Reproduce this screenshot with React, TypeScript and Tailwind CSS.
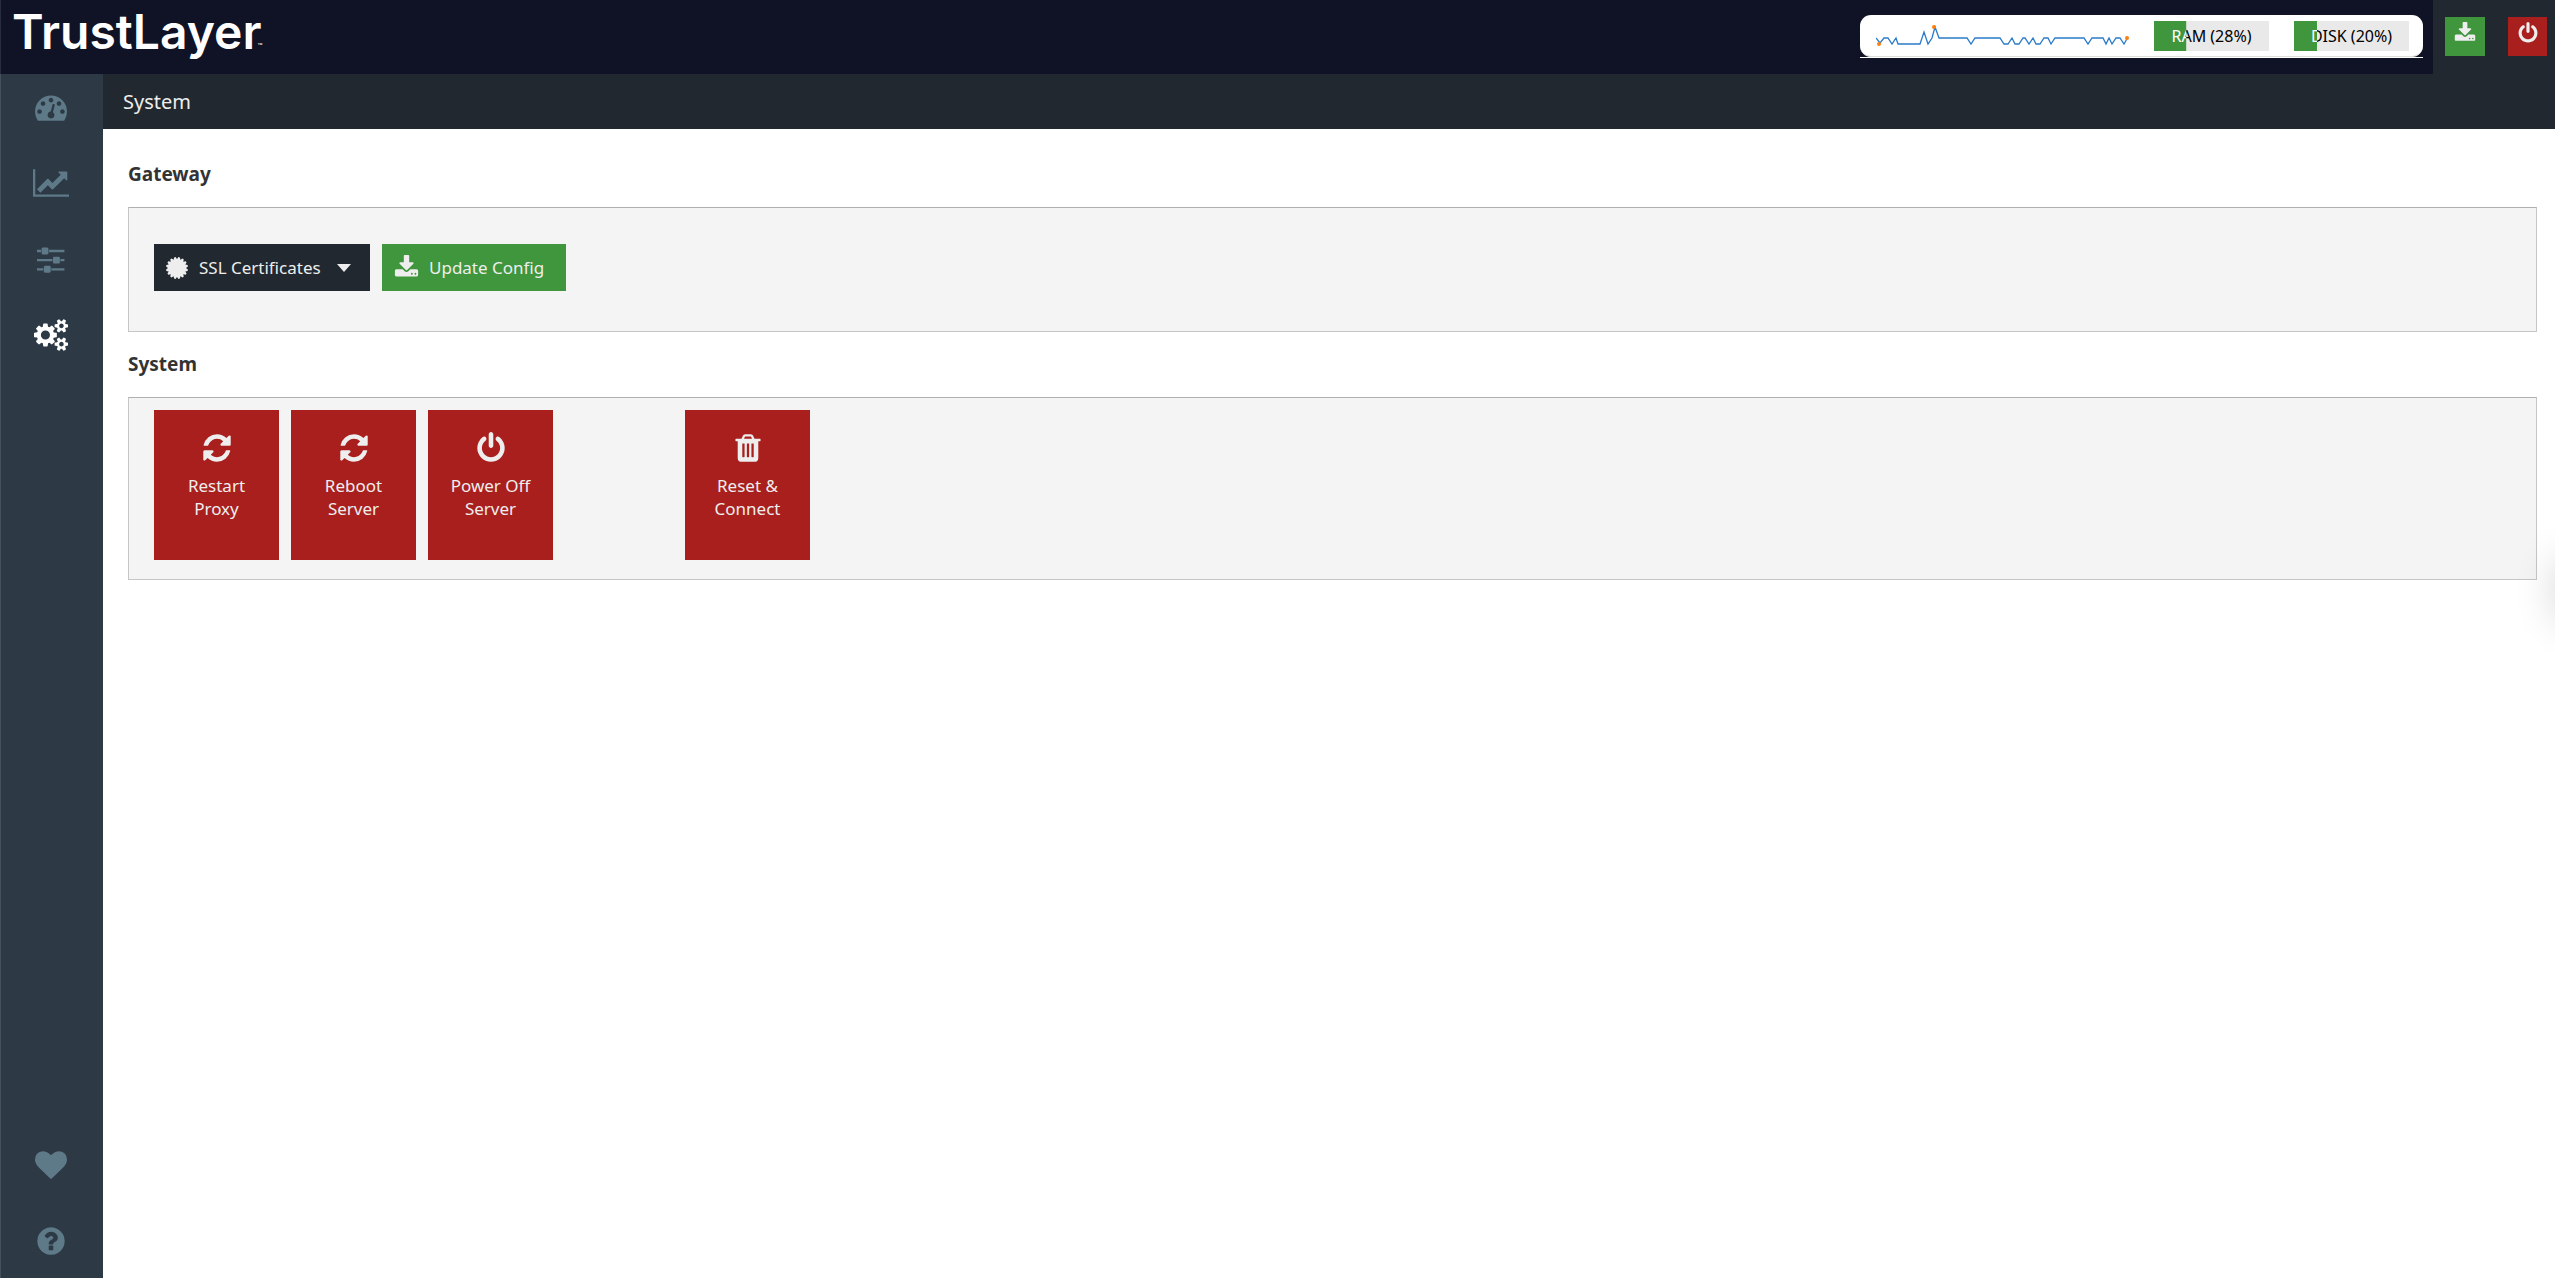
import type { ReactNode } from 'react';

type IconProps = {
  d: string;
  width?: number;
  className?: string;
};

const ICONS = {
  dashboard:
    'M384 1152q0-53-37.5-90.5t-90.5-37.5-90.5 37.5-37.5 90.5 37.5 90.5 90.5 37.5 90.5-37.5 37.5-90.5zm192-448q0-53-37.5-90.5t-90.5-37.5-90.5 37.5-37.5 90.5 37.5 90.5 90.5 37.5 90.5-37.5 37.5-90.5zm428 481l101-382q6-26-7.5-48.5t-38.5-29.5-48 6.5-30 39.5l-101 382q-60 5-107 43.5t-63 98.5q-20 77 20 146t117 89 146-20 89-117q16-60-6-117t-72-91zm660-33q0-53-37.5-90.5t-90.5-37.5-90.5 37.5-37.5 90.5 37.5 90.5 90.5 37.5 90.5-37.5 37.5-90.5zm-640-640q0-53-37.5-90.5t-90.5-37.5-90.5 37.5-37.5 90.5 37.5 90.5 90.5 37.5 90.5-37.5 37.5-90.5zm448 192q0-53-37.5-90.5t-90.5-37.5-90.5 37.5-37.5 90.5 37.5 90.5 90.5 37.5 90.5-37.5 37.5-90.5zm320 448q0 261-141 483-19 29-54 29h-1402q-35 0-54-29-141-221-141-483 0-182 71-348t191-286 286-191 348-71 348 71 286 191 191 286 71 348z',
  chart:
    'M2048 1536v128h-2048v-1536h128v1408h1920zm-128-1248v435q0 21-19.5 29.5t-35.5-7.5l-121-121-633 633q-10 10-23 10t-23-10l-233-233-416 416-192-192 585-585q10-10 23-10t23 10l233 233 464-464-121-121q-16-16-7.5-35.5t29.5-19.5h435q14 0 23 9t9 23z',
  sliders:
    'M352 1408v128h-352v-128h352zm352-128q26 0 45 19t19 45v256q0 26-19 45t-45 19h-256q-26 0-45-19t-19-45v-256q0-26 19-45t45-19h256zm160-384v128h-864v-128h864zm-640-512v128h-224v-128h224zm1312 1024v128h-736v-128h736zm-960-1152q26 0 45 19t19 45v256q0 26-19 45t-45 19h-256q-26 0-45-19t-19-45v-256q0-26 19-45t45-19h256zm640 512q26 0 45 19t19 45v256q0 26-19 45t-45 19h-256q-26 0-45-19t-19-45v-256q0-26 19-45t45-19h256zm320 128v128h-224v-128h224zm0-512v128h-864v-128h864z',
  cogs:
    'M896 896q0-106-75-181t-181-75-181 75-75 181 75 181 181 75 181-75 75-181zm768 512q0-52-38-90t-90-38-90 38-38 90q0 53 37.5 90.5t90.5 37.5 90.5-37.5 37.5-90.5zm0-1024q0-52-38-90t-90-38-90 38-38 90q0 53 37.5 90.5t90.5 37.5 90.5-37.5 37.5-90.5zm-384 421v185q0 10-7 19.5t-16 10.5l-155 24q-11 35-32 76 34 48 90 115 7 11 7 20 0 12-7 19-23 30-82.5 89.5t-78.5 59.5q-11 0-21-7l-115-90q-37 19-77 31-11 108-23 155-7 24-30 24h-186q-11 0-20-7.5t-10-17.5l-23-153q-34-10-75-31l-118 89q-7 7-20 7-11 0-21-8-144-133-144-160 0-9 7-19 10-14 41-53t47-61q-23-44-35-82l-152-24q-10-1-17-9.5t-7-19.5v-185q0-10 7-19.5t16-10.5l155-24q11-35 32-76-34-48-90-115-7-11-7-20 0-12 7-20 22-30 82-89t79-59q11 0 21 7l115 90q34-18 77-32 11-108 23-154 7-24 30-24h186q11 0 20 7.5t10 17.5l23 153q34 10 75 31l118-89q8-7 20-7 11 0 21 8 144 133 144 160 0 9-7 19-12 16-42 54t-45 60q23 48 34 82l152 23q10 2 17 10.5t7 19.5zm640 533v140q0 16-149 31-12 27-30 52 51 113 51 138 0 4-4 7-122 71-124 71-8 0-46-47t-52-68q-20 2-30 2t-30-2q-14 21-52 68t-46 47q-2 0-124-71-4-3-4-7 0-25 51-138-18-25-30-52-149-15-149-31v-140q0-16 149-31 13-29 30-52-51-113-51-138 0-4 4-7 4-2 35-20t59-34 30-16q8 0 46 46.5t52 67.5q20-2 30-2t30 2q51-71 92-112l6-2q4 0 124 70 4 3 4 7 0 25-51 138 17 23 30 52 149 15 149 31zm0-1024v140q0 16-149 31-12 27-30 52 51 113 51 138 0 4-4 7-122 71-124 71-8 0-46-47t-52-68q-20 2-30 2t-30-2q-14 21-52 68t-46 47q-2 0-124-71-4-3-4-7 0-25 51-138-18-25-30-52-149-15-149-31v-140q0-16 149-31 13-29 30-52-51-113-51-138 0-4 4-7 4-2 35-20t59-34 30-16q8 0 46 46.5t52 67.5q20-2 30-2t30 2q51-71 92-112l6-2q4 0 124 70 4 3 4 7 0 25-51 138 17 23 30 52 149 15 149 31z',
  heart:
    'M896 1664q-26 0-44-18l-624-602q-10-8-27.5-26t-55.5-65.5-68-97.5-53.5-121-23.5-138q0-220 127-344t351-124q62 0 126.5 21.5t120 58 95.5 68.5 76 68q36-36 76-68t95.5-68.5 120-58 126.5-21.5q224 0 351 124t127 344q0 221-229 450l-623 600q-18 18-44 18z',
  help:
    'M1024 1376v-192q0-14-9-23t-23-9h-192q-14 0-23 9t-9 23v192q0 14 9 23t23 9h192q14 0 23-9t9-23zm256-672q0-88-55.5-163t-138.5-116-170-41q-243 0-371 213-15 24 8 42l132 100q7 6 19 6 16 0 25-12 53-68 86-92 34-24 86-24 48 0 85.5 26t37.5 59q0 38-20 61t-68 45q-63 28-115.5 86.5t-52.5 125.5v36q0 14 9 23t23 9h192q14 0 23-9t9-23q0-19 21.5-49.5t54.5-49.5q32-18 49-28.5t46-35 44.5-48 28-60.5 12.5-81zm384 192q0 209-103 385.5t-279.5 279.5-385.5 103-385.5-103-279.5-279.5-103-385.5 103-385.5 279.5-279.5 385.5-103 385.5 103 279.5 279.5 103 385.5z',
  refresh:
    'M1639 1056q0 5-1 7-64 268-268 434.5t-478 166.5q-146 0-282.5-55t-243.5-157l-129 129q-19 19-45 19t-45-19-19-45v-448q0-26 19-45t45-19h448q26 0 45 19t19 45-19 45l-137 137q71 66 161 102t187 36q134 0 250-65t186-179q11-17 53-117 8-23 30-23h192q13 0 22.5 9.5t9.5 22.5zm25-800v448q0 26-19 45t-45 19h-448q-26 0-45-19t-19-45 19-45l138-138q-148-137-349-137-134 0-250 65t-186 179q-11 17-53 117-8 23-30 23h-199q-13 0-22.5-9.5t-9.5-22.5v-7q65-268 270-434.5t480-166.5q146 0 284 55.5t245 156.5l130-129q19-19 45-19t45 19 19 45z',
  power:
    'M1664 896q0 156-61 298t-164 245-245 164-298 61-298-61-245-164-164-245-61-298q0-182 80.5-343t226.5-270q43-32 95.5-25t83.5 50q32 42 24.5 94.5t-49.5 84.5q-98 74-151.5 181t-53.5 228q0 104 40.5 198.5t109.5 163.5 163.5 109.5 198.5 40.5 198.5-40.5 163.5-109.5 109.5-163.5 40.5-198.5q0-121-53.5-228t-151.5-181q-42-32-49.5-84.5t24.5-94.5q31-43 84-50t95 25q146 109 226.5 270t80.5 343zm-640-768v640q0 52-38 90t-90 38-90-38-38-90v-640q0-52 38-90t90-38 90 38 38 90z',
  trash:
    'M704 1376v-704q0-14-9-23t-23-9h-64q-14 0-23 9t-9 23v704q0 14 9 23t23 9h64q14 0 23-9t9-23zm256 0v-704q0-14-9-23t-23-9h-64q-14 0-23 9t-9 23v704q0 14 9 23t23 9h64q14 0 23-9t9-23zm256 0v-704q0-14-9-23t-23-9h-64q-14 0-23 9t-9 23v704q0 14 9 23t23 9h64q14 0 23-9t9-23zm-544-992h448l-48-117q-7-9-17-11h-317q-10 2-17 11zm928 32v64q0 14-9 23t-23 9h-96v948q0 83-47 143.5t-113 60.5h-832q-66 0-113-58.5t-47-141.5v-952h-96q-14 0-23-9t-9-23v-64q0-14 9-23t23-9h309l70-167q15-37 54-63t79-26h320q40 0 79 26t54 63l70 167h309q14 0 23 9t9 23z',
  download:
    'M1344 1344q0-26-19-45t-45-19-45 19-19 45 19 45 45 19 45-19 19-45zm256 0q0-26-19-45t-45-19-45 19-19 45 19 45 45 19 45-19 19-45zm128-224v320q0 40-28 68t-68 28h-1472q-40 0-68-28t-28-68v-320q0-40 28-68t68-28h465l135 136q58 56 136 56t136-56l136-136h464q40 0 68 28t28 68zm-325-569q17 41-14 70l-448 448q-18 19-45 19t-45-19l-448-448q-31-29-14-70 17-39 59-39h256v-448q0-26 19-45t45-19h256q26 0 45 19t19 45v448h256q42 0 59 39z',
};

function Icon({ d, width = 1792, className }: IconProps) {
  return (
    <svg viewBox={`0 0 ${width} 1792`} fill="currentColor" aria-hidden="true" className={className}>
      <path d={d} />
    </svg>
  );
}

// Seal with sixteen blunt teeth
function CertificateIcon() {
  const points = Array.from({ length: 16 }, (_, i) => {
    const mid = ((i + 0.5) * Math.PI) / 8;
    return [
      [mid - 0.19, 9],
      [mid - 0.07, 11],
      [mid + 0.07, 11],
      [mid + 0.19, 9],
    ]
      .map(([a, r]) => `${11 + r * Math.cos(a)},${11 + r * Math.sin(a)}`)
      .join(' ');
  }).join(' ');
  return (
    <svg viewBox="0 0 22 22" fill="currentColor" aria-hidden="true" className="size-[22px]">
      <polygon points={points} />
    </svg>
  );
}

const SPARK_POINTS =
  '0,23 4,28 8,23 12,23 16,29 20,23 22,29 44,29 48,17 52,29 56,23 59,12 63,23 91,23 95,29 99,23 124,23 128,29 132,29 136,23 139,29 143,29 147,23 149,23 153,29 157,23 160,29 164,29 168,23 172,23 175,29 179,23 208,23 212,29 216,23 227,23 230,29 233,23 236,29 240,23 244,23 248,29 252,22';

function Sparkline() {
  return (
    <svg viewBox="0 0 256 40" className="h-10 w-64" role="img" aria-label="Load">
      <polyline points={SPARK_POINTS} fill="none" stroke="#2b7bc8" strokeWidth="1.3" />
      <circle cx="3" cy="29" r="2" fill="#ff7f0e" />
      <circle cx="58" cy="12" r="2" fill="#ff7f0e" />
      <circle cx="251" cy="23" r="2" fill="#ff7f0e" />
    </svg>
  );
}

function Meter({ name, percent }: { name: string; percent: number }) {
  const label = `${name} (${percent}%)`;
  return (
    <div
      role="meter"
      aria-label={name}
      aria-valuenow={percent}
      aria-valuemin={0}
      aria-valuemax={100}
      className="relative h-[30px] w-[115px] bg-[#e9e9e9] text-center text-base leading-[30px] text-black"
    >
      {label}
      {/* filled part repeats the label in white, clipped to the bar */}
      <div
        aria-hidden="true"
        className="absolute inset-0 bg-[#3f963c] text-white"
        style={{ clipPath: `inset(0 ${100 - percent}% 0 0)` }}
      >
        {label}
      </div>
    </div>
  );
}

function NavLink({ label, active, children }: { label: string; active?: boolean; children: ReactNode }) {
  return (
    <a
      href="#"
      aria-label={label}
      className={active ? 'flex h-8 justify-center text-white' : 'flex h-8 justify-center text-[#5e7a88]'}
    >
      {children}
    </a>
  );
}

function Tile({ icon, lines }: { icon: string; lines: [string, string] }) {
  return (
    <button type="button" className="flex h-[150px] w-[125px] flex-col items-center bg-[#a91f1d] pt-[22px] text-[#eeeeee]">
      <Icon d={icon} className="size-8" />
      <span className="mt-2.5 text-[17px] leading-[23px]">
        {lines[0]}
        <br />
        {lines[1]}
      </span>
    </button>
  );
}

function Section({ title, children }: { title: string; children: ReactNode }) {
  return (
    <section>
      <h2 className="mb-[21px] text-[19px] leading-6 font-bold text-[#333333]">{title}</h2>
      {children}
    </section>
  );
}

export default function App() {
  return (
    <div className="relative flex min-h-screen flex-col overflow-hidden bg-white font-['Noto_Sans',sans-serif]">
      <header className="flex h-[74px] bg-[#101226] shadow-[inset_1px_0_0_#2a2c3f]">
        <a href="#" className="flex items-baseline pl-3 font-['Inter',sans-serif] text-5xl leading-[64px] font-semibold text-white">
          TrustLayer
          <span className="-ml-1 text-[8px] leading-none font-normal">™</span>
        </a>
        <div className="mt-[15px] mr-2.5 ml-auto h-[43px] border-b border-white">
          <div className="flex h-[42px] items-start rounded-[11px] border-b border-[#dddddd] bg-white pr-[14px] pl-4">
            <Sparkline />
            <div className="mt-1.5 ml-[22px] flex gap-[25px]">
              <Meter name="RAM" percent={28} />
              <Meter name="DISK" percent={20} />
            </div>
          </div>
        </div>
        <div className="flex w-[122px] gap-[23px] bg-[#21282f] pt-[17px] pl-3 text-[#eeeeee]">
          <button type="button" aria-label="Download" className="flex h-[39px] w-10 justify-center bg-[#3f963c] pt-[5px]">
            <Icon d={ICONS.download} className="size-[22px]" />
          </button>
          <button type="button" aria-label="Power" className="flex size-[39px] justify-center bg-[#a91f1d] pt-[5px]">
            <Icon d={ICONS.power} className="size-[22px]" />
          </button>
        </div>
      </header>

      <div className="flex flex-1">
        <nav className="flex w-[103px] flex-col gap-11 bg-[#2d3945] pt-[17px] pr-px pb-[21px] shadow-[inset_1px_0_0_#44505b]">
          <NavLink label="Dashboard">
            <Icon d={ICONS.dashboard} className="h-8" />
          </NavLink>
          <NavLink label="Statistics">
            <Icon d={ICONS.chart} width={2048} className="h-8" />
          </NavLink>
          <NavLink label="Settings">
            <Icon d={ICONS.sliders} width={1536} className="h-8" />
          </NavLink>
          <NavLink label="System" active>
            <Icon d={ICONS.cogs} width={1920} className="h-8" />
          </NavLink>
          <div className="mt-auto flex flex-col gap-11">
            <NavLink label="Health">
              <Icon d={ICONS.heart} className="h-8" />
            </NavLink>
            <NavLink label="Help">
              <Icon d={ICONS.help} className="h-8" />
            </NavLink>
          </div>
        </nav>

        <div className="flex-1">
          <h1 className="h-[55px] bg-[#21282f] pl-5 text-xl leading-[55px] text-[#eeeeee]">System</h1>
          <main className="flex flex-col gap-5 pt-[33px] pr-[18px] pl-[25px]">
            <Section title="Gateway">
              <div className="flex h-[125px] gap-3 border border-[#c6c6c6] border-t-[#b0b0b0] bg-[#f4f4f4] px-[25px] pt-9">
                <button type="button" className="flex h-[47px] w-[216px] items-center bg-[#21282f] pl-3 text-[17px] text-[#eeeeee]">
                  <CertificateIcon />
                  <span className="ml-[11px]">SSL Certificates</span>
                  <svg viewBox="0 0 14 8" fill="currentColor" aria-hidden="true" className="ml-4 h-2 w-3.5">
                    <path d="M0 0h14L7 8z" />
                  </svg>
                </button>
                <button type="button" className="flex h-[47px] w-[184px] items-center bg-[#3f963c] pl-3 text-[17px] text-[#eeeeee]">
                  <Icon d={ICONS.download} className="size-[25px]" />
                  <span className="ml-2.5">Update Config</span>
                </button>
              </div>
            </Section>
            <Section title="System">
              <div className="flex h-[183px] gap-3 border border-[#c6c6c6] border-t-[#b0b0b0] bg-[#f4f4f4] px-[25px] pt-3">
                <Tile icon={ICONS.refresh} lines={['Restart', 'Proxy']} />
                <Tile icon={ICONS.refresh} lines={['Reboot', 'Server']} />
                <Tile icon={ICONS.power} lines={['Power Off', 'Server']} />
                <div className="ml-[120px]">
                  <Tile icon={ICONS.trash} lines={['Reset &', 'Connect']} />
                </div>
              </div>
            </Section>
          </main>
        </div>
      </div>

      <div className="absolute top-[560px] -right-10 h-[60px] w-10 shadow-[0_0_40px_rgba(0,0,0,0.16)]" />
    </div>
  );
}
